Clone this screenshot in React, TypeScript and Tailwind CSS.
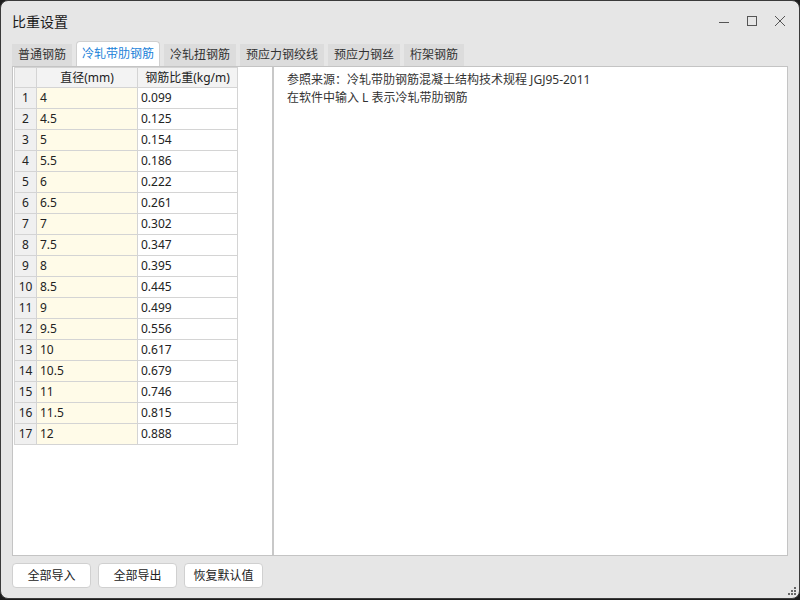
import React from "react";

const rows: [string, string][] = [
  ["4", "0.099"],
  ["4.5", "0.125"],
  ["5", "0.154"],
  ["5.5", "0.186"],
  ["6", "0.222"],
  ["6.5", "0.261"],
  ["7", "0.302"],
  ["7.5", "0.347"],
  ["8", "0.395"],
  ["8.5", "0.445"],
  ["9", "0.499"],
  ["9.5", "0.556"],
  ["10", "0.617"],
  ["10.5", "0.679"],
  ["11", "0.746"],
  ["11.5", "0.815"],
  ["12", "0.888"],
];

const tabs = ["普通钢筋", "冷轧带肋钢筋", "冷轧扭钢筋", "预应力钢绞线", "预应力钢丝", "桁架钢筋"];

const font = { fontFamily: '"Noto Sans", "Noto Sans CJK SC", sans-serif' };

function WindowControls() {
  return (
    <div className="flex items-center gap-[16px] pr-[13px] text-[#555]">
      <svg width="12" height="12" viewBox="0 0 12 12">
        <line x1="1" y1="7.5" x2="11" y2="7.5" stroke="currentColor" strokeWidth="1" />
      </svg>
      <svg width="12" height="12" viewBox="0 0 12 12">
        <rect x="1.5" y="1.5" width="9" height="9" fill="none" stroke="currentColor" strokeWidth="1" />
      </svg>
      <svg width="12" height="12" viewBox="0 0 12 12">
        <path d="M1 1 L11 11 M11 1 L1 11" stroke="currentColor" strokeWidth="1" />
      </svg>
    </div>
  );
}

function RebarTable() {
  return (
    <table className="table-fixed border-collapse text-[12px] text-[#222]">
      <colgroup>
        <col className="w-[22px]" />
        <col className="w-[101px]" />
        <col className="w-[100px]" />
      </colgroup>
      <thead>
        <tr className="h-[20px]">
          <th className="border border-[#d4d4d4] bg-[#f0f0f0] font-normal" />
          <th className="border border-[#d4d4d4] bg-[#f3f3f3] font-normal">直径(mm)</th>
          <th className="border border-[#d4d4d4] bg-[#f3f3f3] font-normal">钢筋比重(kg/m)</th>
        </tr>
      </thead>
      <tbody>
        {rows.map(([d, w], i) => (
          <tr key={d} className="h-[21px]">
            <td className="border border-[#d4d4d4] bg-[#f0f0f0] px-0 text-center leading-none">{i + 1}</td>
            <td className="border border-[#d4d4d4] bg-[#fffbe8] pl-[3px] leading-none">{d}</td>
            <td className="border border-[#d4d4d4] bg-white pl-[3px] leading-none">{w}</td>
          </tr>
        ))}
      </tbody>
    </table>
  );
}

export default function App() {
  return (
    <div className="h-[600px] w-[800px] bg-[#1c1c1c]" style={font}>
      <div className="flex h-[599px] w-[800px] flex-col overflow-hidden rounded-[8px] border border-[#3a3a3a] bg-[#e6e6e6]">
        <div className="flex h-[40px] items-center justify-between">
          <div className="pl-[11px] text-[14px] text-[#1a1a1a]">比重设置</div>
          <WindowControls />
        </div>
        <div className="flex items-end gap-[4px] pl-[11px]">
          {tabs.map((t, i) =>
            i === 1 ? (
              <div
                key={t}
                className="flex h-[25px] items-center rounded-t-[4px] border border-b-0 border-[#d0d0d0] bg-white px-[5px] text-[12px] text-[#1a7fd9]"
              >
                {t}
              </div>
            ) : (
              <div key={t} className="flex h-[22px] items-center bg-[#dcdcdc] px-[6px] text-[12px] text-[#333]">
                {t}
              </div>
            )
          )}
        </div>
        <div className="mx-[11px] flex h-[490px] border border-[#c4c4c4] bg-white">
          <div className="w-[261px] border-r-2 border-[#c8c8c8] pl-[1px]">
            <RebarTable />
          </div>
          <div className="flex-1 px-[13px] pt-[4px] text-[12px] leading-[18px] text-[#333]">
            <div>参照来源：冷轧带肋钢筋混凝土结构技术规程 JGJ95-2011</div>
            <div>在软件中输入 L 表示冷轧带肋钢筋</div>
          </div>
        </div>
        <div className="relative flex flex-1 items-center gap-[7px] px-[11px] pb-[3px]">
          {["全部导入", "全部导出", "恢复默认值"].map((b) => (
            <button
              key={b}
              className="h-[25px] w-[79px] rounded-[4px] border border-[#d0d0d0] bg-white text-[12px] text-[#222]"
            >
              {b}
            </button>
          ))}
          <svg className="absolute bottom-[2px] right-[2px]" width="10" height="10" viewBox="0 0 10 10" fill="#666">
            <rect x="7" y="1" width="2" height="2" />
            <rect x="4" y="4" width="2" height="2" />
            <rect x="7" y="4" width="2" height="2" />
            <rect x="1" y="7" width="2" height="2" />
            <rect x="4" y="7" width="2" height="2" />
            <rect x="7" y="7" width="2" height="2" />
          </svg>
        </div>
      </div>
    </div>
  );
}
